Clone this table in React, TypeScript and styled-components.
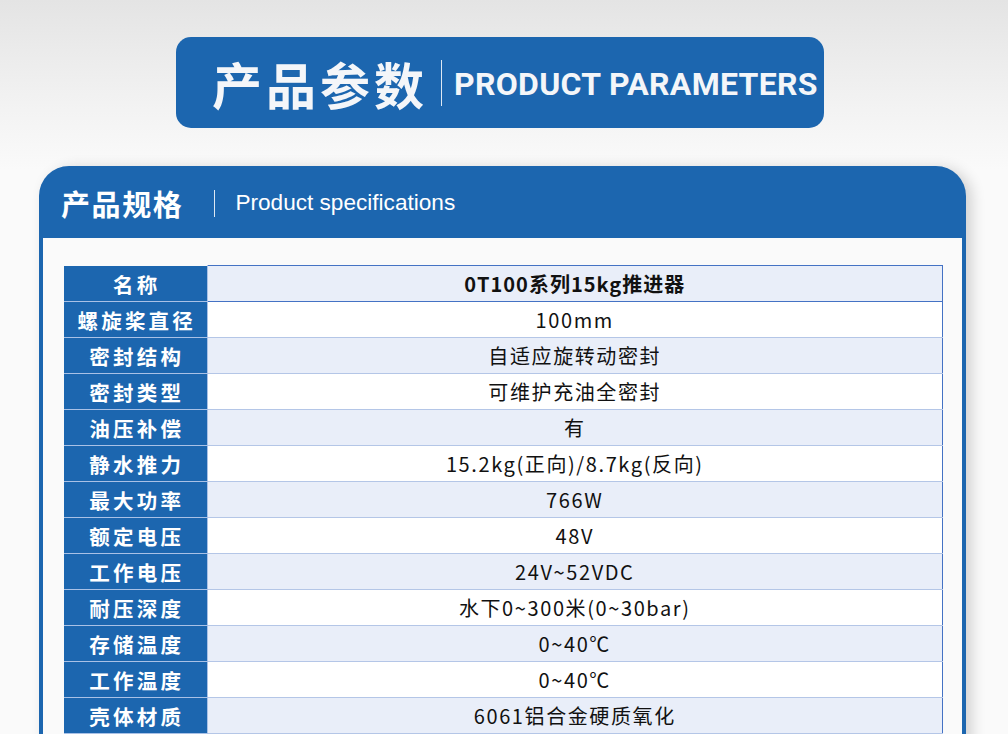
import React from "react";
import styled, { createGlobalStyle } from "styled-components";

const GlobalStyle = createGlobalStyle`
  html, body {
    margin: 0;
    padding: 0;
    overflow: hidden;
  }
  body {
    background: linear-gradient(180deg, #e4e4e4 0px, #f3f3f3 110px, #fafafa 170px, #fafafa 100%);
    font-family: "Noto Sans CJK SC", "Noto Sans", sans-serif;
    min-height: 734px;
  }
`;

const Page = styled.div`
  display: flex;
  flex-direction: column;
  align-items: flex-start;
  padding-top: 37px;
`;

const Banner = styled.div`
  margin-left: 176px;
  width: 648px;
  height: 91px;
  box-sizing: border-box;
  background: #1c66af;
  border-radius: 15px;
  display: flex;
  align-items: center;
  padding-left: 36px;
  color: #f4f6f9;
`;

const BannerTitle = styled.div`
  font-family: "Noto Sans CJK SC", sans-serif;
  font-weight: 700;
  font-size: 50px;
  letter-spacing: 4px;
  line-height: 1;
`;

const Divider = styled.div<{ $h: number; $ml: number }>`
  width: 1px;
  height: ${(p) => p.$h}px;
  margin-left: ${(p) => p.$ml}px;
  background: rgba(255, 255, 255, 0.85);
`;

const BannerSub = styled.div`
  margin-left: 12px;
  font-family: Roboto, "Liberation Sans", sans-serif;
  font-weight: 700;
  font-size: 32px;
  letter-spacing: 0.3px;
  line-height: 1;
  padding-top: 2px;
`;

const Card = styled.div`
  margin-top: 38px;
  margin-left: 39px;
  width: 927px;
  background: #1c66af;
  border-radius: 30px 30px 0 0;
  box-shadow: 6px 2px 14px rgba(0, 0, 0, 0.16);
  padding: 0 4px;
  box-sizing: border-box;
`;

const CardHeader = styled.div`
  height: 72px;
  display: flex;
  align-items: center;
  padding-left: 18px;
  padding-top: 3px;
  box-sizing: border-box;
  color: #ffffff;
`;

const CardTitle = styled.div`
  font-weight: 700;
  font-size: 29px;
  letter-spacing: 1.6px;
  line-height: 1;
`;

const CardSub = styled.div`
  margin-left: 20px;
  font-family: "Liberation Sans", Arial, sans-serif;
  font-size: 22.6px;
  line-height: 1;
`;

const CardBody = styled.div`
  background: #fafafa;
  padding: 27px 19px 40px 21px;
`;

const Table = styled.table`
  width: 879px;
  border-collapse: collapse;
  table-layout: fixed;
`;

const Row = styled.tr`
  height: 36px;
`;

const LabelCell = styled.th`
  width: 143px;
  background: #1c66af;
  color: #ffffff;
  font-weight: 700;
  font-size: 20.5px;
  letter-spacing: 3.2px;
  padding: 1px 0 0 3px;
  text-align: center;
  border-right: 1px solid #a9c1e6;
  border-bottom: 1px solid #a9c1e6;
  box-sizing: border-box;
  line-height: 1;
`;

const ValueCell = styled.td<{ $alt: boolean; $first: boolean }>`
  background: ${(p) => (p.$alt ? "#e9eef9" : "#ffffff")};
  color: #111111;
  font-size: 20px;
  font-weight: ${(p) => (p.$first ? 700 : 400)};
  letter-spacing: ${(p) => (p.$first ? "1px" : "1.6px")};
  text-align: center;
  padding: 1px 0 0;
  line-height: 1;
  border-right: 1px solid #4472c4;
  border-top: ${(p) => (p.$first ? "1px solid #4472c4" : "none")};
  border-bottom: 1px solid ${(p) => (p.$first ? "#4472c4" : "#b4c6e7")};
`;

const rows: [string, string][] = [
  ["名称", "0T100系列15kg推进器"],
  ["螺旋桨直径", "100mm"],
  ["密封结构", "自适应旋转动密封"],
  ["密封类型", "可维护充油全密封"],
  ["油压补偿", "有"],
  ["静水推力", "15.2kg(正向)/8.7kg(反向)"],
  ["最大功率", "766W"],
  ["额定电压", "48V"],
  ["工作电压", "24V~52VDC"],
  ["耐压深度", "水下0~300米(0~30bar)"],
  ["存储温度", "0~40℃"],
  ["工作温度", "0~40℃"],
  ["壳体材质", "6061铝合金硬质氧化"],
];

export default function App() {
  return (
    <>
      <GlobalStyle />
      <Page>
        <Banner>
          <BannerTitle>产品参数</BannerTitle>
          <Divider $h={46} $ml={13} />
          <BannerSub>PRODUCT PARAMETERS</BannerSub>
        </Banner>
        <Card>
          <CardHeader>
            <CardTitle>产品规格</CardTitle>
            <Divider $h={27} $ml={31} />
            <CardSub>Product specifications</CardSub>
          </CardHeader>
          <CardBody>
            <Table>
              <tbody>
                {rows.map(([k, v], i) => (
                  <Row key={k}>
                    <LabelCell>{k}</LabelCell>
                    <ValueCell $alt={i % 2 === 0} $first={i === 0}>
                      {v}
                    </ValueCell>
                  </Row>
                ))}
              </tbody>
            </Table>
          </CardBody>
        </Card>
      </Page>
    </>
  );
}
